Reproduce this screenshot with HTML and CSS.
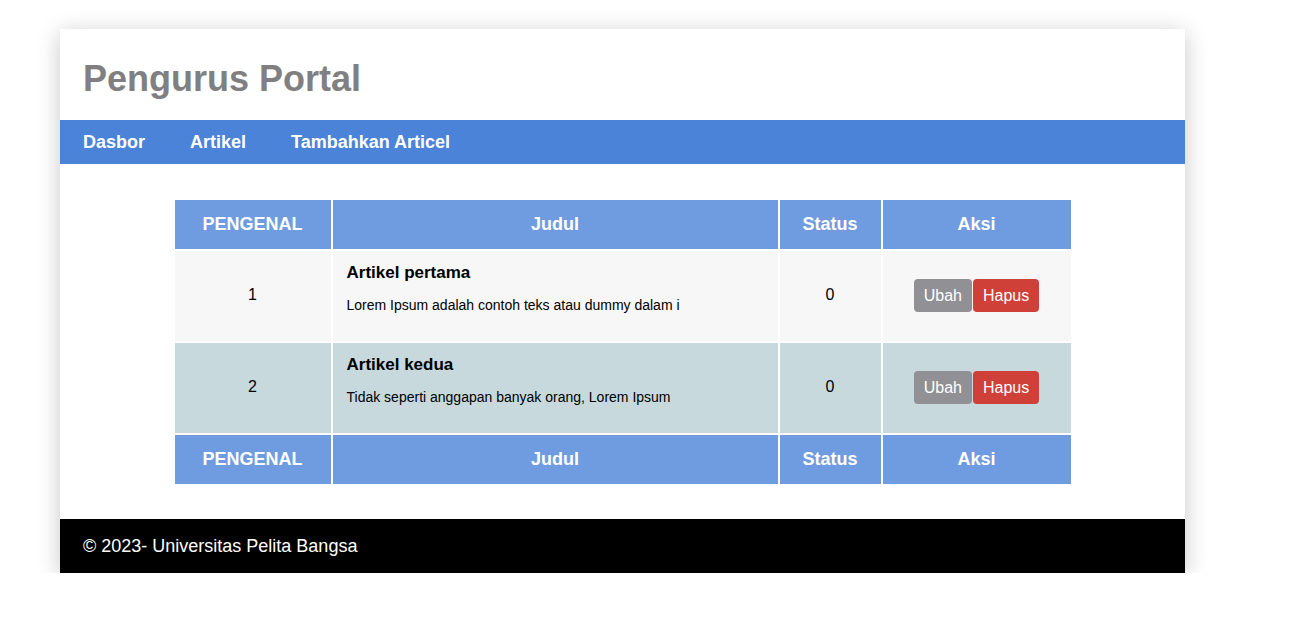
FILE: index.html
```html
<!DOCTYPE html>
<html lang="id">
<head>
<meta charset="utf-8">
<title>Pengurus Portal</title>
<link rel="stylesheet" href="styles.css">
</head>
<body>
<div class="container">
  <header class="header">
    <h1 class="title">Pengurus Portal</h1>
  </header>
  <nav class="nav">
    <a class="nav-link" href="#">Dasbor</a>
    <a class="nav-link" href="#">Artikel</a>
    <a class="nav-link" href="#">Tambahkan Articel</a>
  </nav>
  <main class="content">
    <table class="table">
      <thead>
        <tr>
          <th class="c-id">PENGENAL</th>
          <th class="c-title">Judul</th>
          <th class="c-status">Status</th>
          <th class="c-action">Aksi</th>
        </tr>
      </thead>
      <tbody>
        <tr class="row-odd">
          <td class="center">1</td>
          <td class="cell-title">
            <h3 class="art-title">Artikel pertama</h3>
            <p class="art-desc">Lorem Ipsum adalah contoh teks atau dummy dalam i</p>
          </td>
          <td class="center">0</td>
          <td class="center">
            <div class="actions"><a class="btn btn-edit" href="#">Ubah</a><a class="btn btn-del" href="#">Hapus</a></div>
          </td>
        </tr>
        <tr class="row-even">
          <td class="center">2</td>
          <td class="cell-title">
            <h3 class="art-title">Artikel kedua</h3>
            <p class="art-desc">Tidak seperti anggapan banyak orang, Lorem Ipsum</p>
          </td>
          <td class="center">0</td>
          <td class="center">
            <div class="actions"><a class="btn btn-edit" href="#">Ubah</a><a class="btn btn-del" href="#">Hapus</a></div>
          </td>
        </tr>
      </tbody>
      <tfoot>
        <tr>
          <th>PENGENAL</th>
          <th>Judul</th>
          <th>Status</th>
          <th>Aksi</th>
        </tr>
      </tfoot>
    </table>
  </main>
  <footer class="footer">&copy; 2023- Universitas Pelita Bangsa</footer>
</div>
</body>
</html>
```

FILE: styles.css
```css
* { box-sizing: border-box; }

body {
  margin: 0;
  background: #ffffff;
  font-family: "Liberation Sans", Arial, sans-serif;
  color: #000;
}

.container {
  width: 1125px;
  margin: 29px 0 0 60px;
  background: #ffffff;
  box-shadow: 0 4px 22px rgba(0, 0, 0, 0.22);
}

.header {
  padding: 29px 23px 21px;
}

.title {
  margin: 0;
  font-size: 36px;
  line-height: 41px;
  font-weight: bold;
  color: #808080;
}

.nav {
  display: flex;
  gap: 45px;
  padding: 0 0 0 23px;
  background: #4b83d8;
}

.nav-link {
  display: block;
  padding: 12px 0;
  font-size: 18px;
  line-height: 20px;
  font-weight: bold;
  color: #ffffff;
  text-decoration: none;
}

.content {
  padding: 34px 0 33px;
}

.table {
  width: 900px;
  margin: 0 auto;
  border-spacing: 2px;
  table-layout: fixed;
}

.table th {
  background: #6f9ce0;
  color: #ffffff;
  font-size: 18px;
  line-height: 21px;
  font-weight: bold;
  padding: 14px 8px;
  text-align: center;
}

.c-id { width: 156px; }
.c-title { width: 445px; }
.c-status { width: 101px; }
.c-action { width: 188px; }

.table td {
  padding: 12px 14px 14px;
  font-size: 16px;
  line-height: 18px;
  vertical-align: middle;
}

.center { text-align: center; }

.row-odd td { background: #f7f7f7; }
.row-even td { background: #c7d9dc; }

.art-title {
  margin: 0 0 14px;
  font-size: 17px;
  line-height: 20px;
  font-weight: bold;
}

.art-desc {
  margin: 0 0 14px;
  font-size: 14px;
  line-height: 16px;
}

.actions {
  display: flex;
  justify-content: center;
  gap: 1px;
}

.btn {
  display: block;
  padding: 7px 10px;
  font-size: 16px;
  line-height: 19px;
  color: #ffffff;
  text-decoration: none;
  border-radius: 4px;
}

.btn-edit { background: #909095; }
.btn-del { background: #cf4039; }

.footer {
  background: #000000;
  color: #ffffff;
  font-size: 18px;
  line-height: 20px;
  padding: 17px 23px;
}
```
